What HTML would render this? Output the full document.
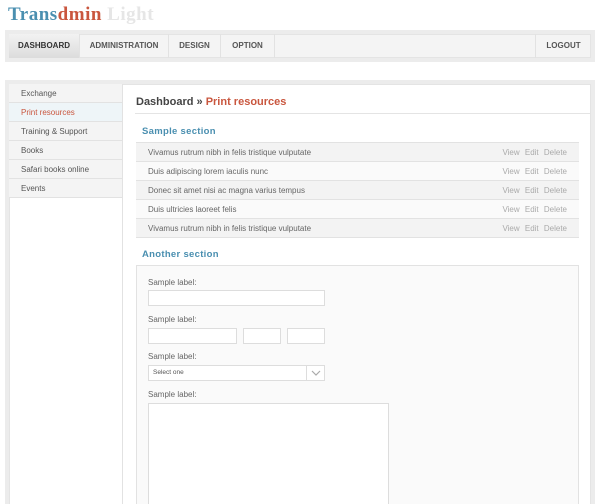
<!DOCTYPE html>
<html style="width:600px;height:504px;overflow:hidden"><head><style>
*{margin:0;padding:0;box-sizing:border-box}
body{width:600px;height:504px;overflow:hidden;background:#fff;font-family:"Liberation Sans",sans-serif;position:relative}
.abs{position:absolute}
.logo{left:8px;top:4px;font-family:"Liberation Serif",serif;font-weight:bold;font-size:19px;letter-spacing:0.5px}
.navo{left:5px;top:30px;width:590px;height:32px;background:#ececec}
.navi{left:9px;top:34px;width:582px;height:24px;background:#f4f4f4;border:1px solid #e4e4e4}
.ni{position:absolute;top:34px;height:24px;font-size:8px;font-weight:bold;color:#555;text-align:center;line-height:24px;border-right:1px solid #e2e2e2}
.mo{left:5px;top:80px;width:590px;height:424px;background:#ececec}
.mi{left:9px;top:84px;width:582px;height:420px;background:#fff;border:1px solid #e4e4e4;border-bottom:none}
.side{left:9px;top:84px;width:114px;height:420px;border-right:1px solid #e2e2e2}
.si{height:19px;line-height:19px;font-size:8px;color:#555;padding-left:12px;background:#f4f4f4;border-bottom:1px solid #e2e2e2}
.row{position:absolute;left:136px;width:443px;height:19px;line-height:19px;font-size:8px;color:#666;padding-left:12px;border-bottom:1px solid #e2e2e2}
.act{position:absolute;right:12px;top:0;color:#aaa;word-spacing:3px}
.lbl{position:absolute;left:148px;font-size:8px;color:#666}
.inp{position:absolute;background:#fff;border:1px solid #ddd}
h3{position:absolute;font-size:9.5px;color:#4a8fb0;font-weight:bold;letter-spacing:.3px}
</style></head><body>
<div class="abs logo"><span style="color:#4a8fb0">Trans</span><span style="color:#c9563e">dmin</span> <span style="color:#e6e6e6">Light</span></div>
<div class="abs navo"></div><div class="abs navi"></div>
<div class="ni" style="left:9px;width:71px;background:linear-gradient(#f2f2f2,#dcdcdc);color:#333">DASHBOARD</div>
<div class="ni" style="left:80px;width:89px">ADMINISTRATION</div>
<div class="ni" style="left:169px;width:52px">DESIGN</div>
<div class="ni" style="left:221px;width:54px">OPTION</div>
<div class="ni" style="left:535px;width:56px;border-right:none;border-left:1px solid #e2e2e2">LOGOUT</div>
<div class="abs mo"></div><div class="abs mi"></div>
<div class="abs side">
<div class="si">Exchange</div>
<div class="si" style="color:#c9563e;background:#eef5f8">Print resources</div>
<div class="si">Training &amp; Support</div>
<div class="si">Books</div>
<div class="si">Safari books online</div>
<div class="si">Events</div>
</div>
<div class="abs" style="left:136px;top:96px;font-size:11px;font-weight:bold;color:#444">Dashboard » <span style="color:#c9563e">Print resources</span></div>
<div class="abs" style="left:135px;top:113px;width:456px;height:1px;background:#e4e4e4"></div>
<h3 style="left:142px;top:126px">Sample section</h3>
<div class="abs" style="left:136px;top:142px;width:443px;height:1px;background:#e2e2e2"></div>
<div class="row" style="top:143px;background:#f3f3f3">Vivamus rutrum nibh in felis tristique vulputate<span class="act">View Edit Delete</span></div>
<div class="row" style="top:162px;background:#fafafa">Duis adipiscing lorem iaculis nunc<span class="act">View Edit Delete</span></div>
<div class="row" style="top:181px;background:#f3f3f3">Donec sit amet nisi ac magna varius tempus<span class="act">View Edit Delete</span></div>
<div class="row" style="top:200px;background:#fafafa">Duis ultricies laoreet felis<span class="act">View Edit Delete</span></div>
<div class="row" style="top:219px;background:#f3f3f3">Vivamus rutrum nibh in felis tristique vulputate<span class="act">View Edit Delete</span></div>
<h3 style="left:142px;top:249px">Another section</h3>
<div class="abs" style="left:136px;top:265px;width:443px;height:239px;background:#fafafa;border:1px solid #e2e2e2;border-bottom:none"></div>
<div class="lbl" style="top:278px">Sample label:</div>
<div class="inp" style="left:148px;top:290px;width:177px;height:16px"></div>
<div class="lbl" style="top:315px">Sample label:</div>
<div class="inp" style="left:148px;top:328px;width:89px;height:16px"></div>
<div class="inp" style="left:243px;top:328px;width:38px;height:16px"></div>
<div class="inp" style="left:287px;top:328px;width:38px;height:16px"></div>
<div class="lbl" style="top:352px">Sample label:</div>
<div class="inp" style="left:148px;top:365px;width:177px;height:16px;font-size:6.5px;color:#555;line-height:14px;padding-left:4px">Select one
<div style="position:absolute;right:0;top:0;width:18px;height:14px;border-left:1px solid #ddd"><svg width="18" height="14" style="display:block"><path d="M5 5 L9 9 L13 5" stroke="#aaa" stroke-width="1.2" fill="none"/></svg></div></div>
<div class="lbl" style="top:390px">Sample label:</div>
<div class="inp" style="left:148px;top:403px;width:241px;height:101px;border-bottom:none"></div>
</body></html>
